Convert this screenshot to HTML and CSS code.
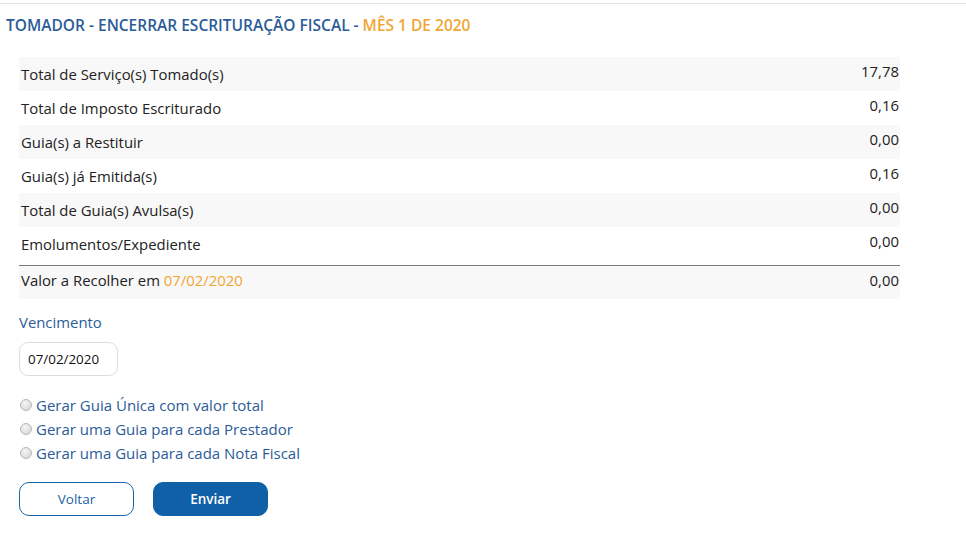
FILE: index.html
```html
<!DOCTYPE html>
<html lang="pt-BR">
<head>
<meta charset="utf-8">
<link rel="stylesheet" href="styles.css">
</head>
<body>
<div class="page">
  <h1 class="title">TOMADOR - ENCERRAR ESCRITURAÇÃO FISCAL - <span class="accent">MÊS 1 DE 2020</span></h1>
  <div class="summary">
    <div class="row shade"><span class="label">Total de Serviço(s) Tomado(s)</span><span class="value">17,78</span></div>
    <div class="row"><span class="label">Total de Imposto Escriturado</span><span class="value">0,16</span></div>
    <div class="row shade"><span class="label">Guia(s) a Restituir</span><span class="value">0,00</span></div>
    <div class="row"><span class="label">Guia(s) já Emitida(s)</span><span class="value">0,16</span></div>
    <div class="row shade"><span class="label">Total de Guia(s) Avulsa(s)</span><span class="value">0,00</span></div>
    <div class="row"><span class="label">Emolumentos/Expediente</span><span class="value">0,00</span></div>
    <div class="row shade total"><span class="label">Valor a Recolher em <span class="accent">07/02/2020</span></span><span class="value">0,00</span></div>
  </div>
  <div class="field">
    <label class="field-label">Vencimento</label>
    <div class="date-input">07/02/2020</div>
  </div>
  <div class="options">
    <label class="option"><span class="radio"></span>Gerar Guia Única com valor total</label>
    <label class="option"><span class="radio"></span>Gerar uma Guia para cada Prestador</label>
    <label class="option"><span class="radio"></span>Gerar uma Guia para cada Nota Fiscal</label>
  </div>
  <div class="actions">
    <button class="btn btn-outline">Voltar</button>
    <button class="btn btn-primary">Enviar</button>
  </div>
</div>
</body>
</html>
```

FILE: styles.css
```css
html, body {
  margin: 0;
  padding: 0;
  background: #fff;
}
body {
  font-family: "Open Sans", "Noto Sans", sans-serif;
  color: #222;
}
.page {
  border-top: 1px solid #e2e2e2;
  margin-top: 3px;
  padding: 0 0 0 6px;
}
.title {
  margin: 10px 0 0 0;
  font-size: 15.5px;
  font-weight: 600;
  color: #2b5c98;
  line-height: 22px;
  letter-spacing: 0;
}
.accent {
  color: #f2a535;
}
.summary {
  margin: 21px 0 0 13px;
  width: 881px;
}
.row {
  display: flex;
  justify-content: space-between;
  height: 34px;
  font-size: 14.9px;
  color: #222;
}
.row.shade {
  background: #f8f8f8;
}
.label {
  padding: 7px 0 0 2px;
  line-height: 20px;
}
.value {
  padding: 4px 1px 0 0;
  line-height: 20px;
}
.total {
  margin-top: 4px;
  border-top: 1px solid #7a7a7a;
  height: 33px;
}
.total .label {
  padding-top: 4px;
}
.total .value {
  padding-top: 4px;
}
.field {
  margin: 13px 0 0 13px;
}
.field-label {
  display: block;
  font-size: 14.9px;
  color: #2b5c98;
  line-height: 20px;
}
.date-input {
  margin-top: 10px;
  width: 99px;
  height: 34px;
  box-sizing: border-box;
  border: 1px solid #dcdcdc;
  border-radius: 9px;
  font-size: 13.4px;
  line-height: 32px;
  padding-left: 8px;
  color: #111;
}
.options {
  margin: 17px 0 0 13px;
  display: flex;
  flex-direction: column;
}
.option {
  display: flex;
  align-items: center;
  font-size: 15px;
  color: #2b5c98;
  height: 24px;
}
.radio {
  width: 12px;
  height: 12px;
  border-radius: 50%;
  border: 1px solid #b8b8b8;
  background: radial-gradient(circle at 40% 35%, #f4f4f4 0%, #dcdcdc 70%, #cfcfcf 100%);
  margin: 0 4px 0 1px;
  box-sizing: border-box;
}
.actions {
  margin: 17px 0 0 13px;
  display: flex;
  gap: 19px;
}
.btn {
  width: 115px;
  height: 34px;
  border-radius: 10px;
  font-family: "Open Sans", "Noto Sans", sans-serif;
  font-size: 13.5px;
  cursor: pointer;
}
.btn-outline {
  background: #fff;
  border: 1px solid #1b63a8;
  color: #1b5fa3;
}
.btn-primary {
  background: #1060a8;
  border: 1px solid #1060a8;
  color: #fff;
  font-weight: 600;
}
```
